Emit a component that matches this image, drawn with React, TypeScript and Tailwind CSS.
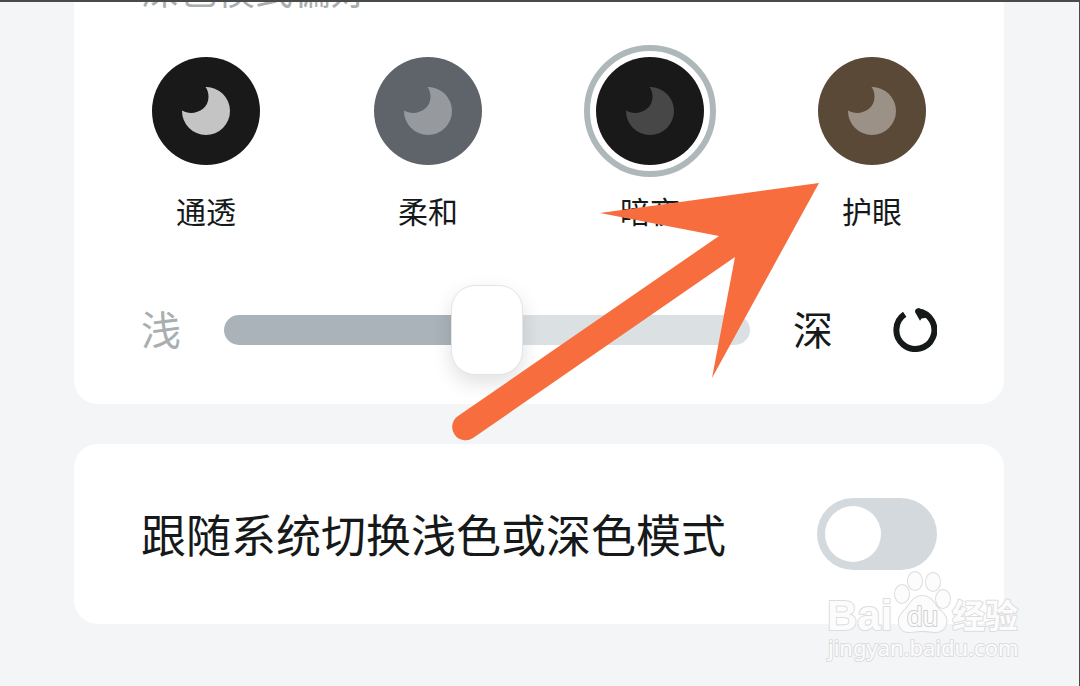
import React, { useState } from 'react';

const modes = [{
  id: "clear",
  name: "通透",
  circle: "bg-[#191919]",
  moon: "text-[#c4c4c4]"
}, {
  id: "soft",
  name: "柔和",
  circle: "bg-[#5f646b]",
  moon: "text-[#96999e]"
}, {
  id: "night",
  name: "暗夜",
  circle: "bg-[#191919]",
  moon: "text-[#474747]"
}, {
  id: "eye",
  name: "护眼",
  circle: "bg-[#5a4936]",
  moon: "text-[#9c9186]"
}];

const Moon = ({ className }: { className: string }) => <svg viewBox="0 0 48 48" className={`w-12 h-12 ${className}`} fill="currentColor" aria-hidden="true">
    <path d="M23.5 0A24 24 0 1 1 0 23.5C10 29.5 26.5 24 26.5 10C26.5 6 25.5 2.5 23.5 0Z" />
  </svg>;

const ResetIcon = () => <svg viewBox="0 0 44 44" className="w-11 h-11" fill="none" aria-hidden="true">
    <path d="M11.7 6.3A19 19 0 1 0 25 3.2" stroke="currentColor" strokeWidth="6" />
    <path d="M22 4Q22 0 26 0.3L36 7L35.3 9.5L28.5 10.5L27 12.8Z" fill="currentColor" />
  </svg>;

const Arrow = () => <svg viewBox="0 0 372 262" className="absolute left-[450px] top-[178px] w-[372px] h-[262px] pointer-events-none" fill="#f76d3d" aria-hidden="true">
    <path d="M369 3L150 33L269 56L8 236A13 13 0 0 0 23 258L285 77L262 198Z" />
  </svg>;

const Watermark = () => <svg viewBox="0 0 210 105" className="absolute right-[49px] bottom-[16px] w-[210px] h-[105px] pointer-events-none" aria-hidden="true">
    <g fill="#fcfcfc" stroke="#dcddde" strokeWidth="2" paintOrder="stroke" strokeLinejoin="round">
      <text x="7" y="65" className="text-[42px] font-bold font-['Liberation_Sans']">Bai</text>
      <ellipse cx="82" cy="29" rx="7" ry="9" />
      <ellipse cx="95" cy="16" rx="7" ry="9" />
      <ellipse cx="113" cy="17" rx="7" ry="9" />
      <ellipse cx="123" cy="34" rx="7" ry="9" />
      <path d="M102 31C113 31 114 41 121 46C131 54 126 67 116 67C110 67 108 66 102 66C96 66 94 67 89 67C78 67 76 54 83 47C90 41 92 31 102 31Z" />
      <text x="87" y="61" stroke="#cfd0d1" className="text-[28px] font-['Liberation_Sans']">du</text>
      <text x="132" y="63" className="text-[33px] font-bold font-['Noto_Sans_CJK_SC']">经验</text>
      <text x="8" y="91" className="text-[22px] font-['Noto_Sans']">jingyan.baidu.com</text>
    </g>
  </svg>;

const App = () => {
  const [mode, setMode] = useState("night");
  const [depth, setDepth] = useState(50);
  const [followSystem, setFollowSystem] = useState(false);
  return <div className="relative min-h-screen flex flex-col gap-10 overflow-hidden border-t-2 border-r border-[#4a4a4a] bg-[#f3f5f7] pl-[74px] pr-[75px] pb-[62px] text-[#16191a] font-['Noto_Sans_CJK_SC',sans-serif]">
      {/* Dark mode preference */}
      <section className="rounded-b-3xl bg-white px-[67px] pb-[29px]">
        <h2 className="flex h-[10px] items-end overflow-hidden text-[38px] leading-[48px] text-[#a9afb1]">深色模式偏好</h2>
        <div className="flex justify-between px-[11px] mt-[45px]">
          {modes.map(item => <label key={item.id} className="relative flex flex-col items-center gap-[27px] cursor-pointer">
              <input type="radio" name="mode" value={item.id} checked={mode === item.id} onChange={() => setMode(item.id)} className="peer sr-only" />
              <span className={`flex w-[108px] h-[108px] items-center justify-center rounded-full outline-[#aeb7b9] outline-offset-[6px] peer-checked:outline-[6px] ${item.circle}`}>
                <Moon className={item.moon} />
              </span>
              <span className="text-[30px] leading-9">{item.name}</span>
            </label>)}
        </div>
        <div className="flex items-center mt-[57px] h-[90px] text-[40px] leading-[48px]">
          <label htmlFor="depth" className="pb-1 text-[#a9afb1]">浅</label>
          <input id="depth" type="range" min="0" max="100" value={depth} onChange={e => setDepth(Number(e.target.value))} style={{ "--fill": `${depth}%` } as React.CSSProperties} className="mx-[43px] h-[90px] min-w-0 flex-1 appearance-none bg-transparent [&::-webkit-slider-runnable-track]:h-[30px] [&::-webkit-slider-runnable-track]:rounded-full [&::-webkit-slider-runnable-track]:bg-[linear-gradient(to_right,#a9b3b9_var(--fill),#dbe0e3_var(--fill))] [&::-webkit-slider-thumb]:-mt-[30px] [&::-webkit-slider-thumb]:h-[90px] [&::-webkit-slider-thumb]:w-[72px] [&::-webkit-slider-thumb]:appearance-none [&::-webkit-slider-thumb]:rounded-3xl [&::-webkit-slider-thumb]:border [&::-webkit-slider-thumb]:border-[#e2e4e5] [&::-webkit-slider-thumb]:bg-white [&::-webkit-slider-thumb]:shadow-[0_8px_20px_rgba(0,0,0,0.12)]" />
          <span className="pb-1">深</span>
          <button type="button" aria-label="重置" onClick={() => setDepth(50)} className="ml-[60px]">
            <ResetIcon />
          </button>
        </div>
      </section>

      {/* Follow system */}
      <section className="rounded-3xl bg-white px-[67px] py-[54px]">
        <label className="flex items-center justify-between cursor-pointer">
          <span className="text-[45px] leading-[72px]">跟随系统切换浅色或深色模式</span>
          <input type="checkbox" role="switch" checked={followSystem} onChange={e => setFollowSystem(e.target.checked)} className="h-[72px] w-[120px] appearance-none rounded-full bg-[#d3d9dd] p-2 before:block before:h-14 before:w-14 before:rounded-full before:bg-white checked:bg-[#3478f6] checked:before:ml-auto" />
        </label>
      </section>

      <Arrow />
      <Watermark />
    </div>;
};
export default App;
